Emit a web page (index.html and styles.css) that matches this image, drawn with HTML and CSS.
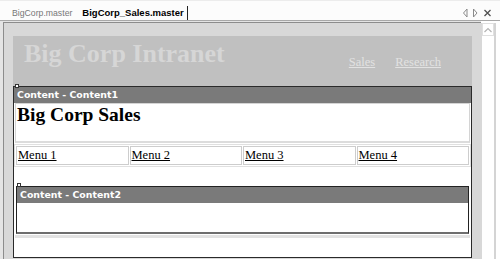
FILE: index.html
```html
<!DOCTYPE html>
<html lang="en">
<head>
  <meta charset="UTF-8" />
  <title>BigCorp_Sales.master</title>
  <link rel="stylesheet" href="styles.css">
</head>
<body>

  <div class="tabs">
    <span class="tab">BigCorp.master</span>
    <span class="tab active">BigCorp_Sales.master</span>
    <svg class="tab-tools" width="30" height="10" viewBox="0 0 30 10">
      <polygon points="5,1 1.5,5 5,9" fill="none" stroke="#8a8a8a" />
      <polygon points="11.5,1 15,5 11.5,9" fill="none" stroke="#8a8a8a" />
      <path d="M22.5 2 L28.5 8 M28.5 2 L22.5 8" stroke="#505050" stroke-width="1.3" />
    </svg>
  </div>

  <div class="workspace">
    <div class="surface">
      <div class="site-header">
        <span class="site-title">Big Corp Intranet</span>
        <nav class="site-nav">
          <a href="#">Sales</a>
          <a href="#">Research</a>
        </nav>
      </div>

      <div class="page-body">
        <span class="glyph first-glyph"></span>
        <div class="ph-bar">Content - Content1</div>
        <div class="sales-box">
          <h1>Big Corp Sales</h1>
        </div>
        <table class="menu">
          <tr>
            <td><a href="#">Menu 1</a></td>
            <td><a href="#">Menu 2</a></td>
            <td><a href="#">Menu 3</a></td>
            <td><a href="#">Menu 4</a></td>
          </tr>
        </table>

        <div class="ph-wrap">
          <div class="placeholder">
            <span class="glyph"></span>
            <div class="ph-bar">Content - Content2</div>
            <div class="ph-empty"></div>
          </div>
        </div>
      </div>
    </div>

    <div class="scrollbar">
      <div class="scroll-track">
        <div class="scroll-up">
          <svg width="10" height="6" viewBox="0 0 10 6">
            <path d="M1.5 5 L5 1.5 L8.5 5" fill="none" stroke="#b4b4b4" stroke-width="1.2" />
          </svg>
        </div>
      </div>
    </div>
  </div>

</body>
</html>
```

FILE: styles.css
```css
body {
  margin: 0;
  width: 500px;
  height: 259px;
  overflow: hidden;
  background: #e4e4e4;
}

/* document tabs */
.tabs {
  height: 19px;
  display: flex;
  align-items: flex-end;
  padding-left: 6px;
  background: #fcfcfc;
  border-top: 1px solid #ececec;
  border-bottom: 1px solid #a8a8a8;
}

.tab {
  height: 14px;
  line-height: 14px;
  padding: 0 5px 0 6px;
  font-family: "Liberation Sans", Arial, sans-serif;
  font-size: 8.7px;
  color: #777;
}

.tab.active {
  padding: 0 3px 0 5px;
  font-weight: bold;
  font-size: 9.5px;
  color: #000;
  border-right: 1px solid #222;
}

.tab-tools {
  margin-left: auto;
  margin-right: 8px;
  margin-bottom: 2px;
}

/* design surface */
.workspace {
  display: flex;
  height: 238px;
}

.surface {
  flex: 1;
  margin: 1px 0 0 3px;
  padding: 13px 9px 0 9px;
  background: #d8d8d8;
  border-left: 1px solid #8c8c8c;
  border-top: 1px solid #8c8c8c;
}

.site-header {
  height: 47px;
  padding: 3px 31px 0 11px;
  display: flex;
  justify-content: space-between;
  align-items: flex-start;
  background: #c0c0c0;
}

.site-title {
  font-family: "Liberation Serif", "Times New Roman", serif;
  font-weight: bold;
  font-size: 26px;
  color: #d6d6d6;
}

.site-nav {
  display: flex;
  gap: 20px;
  margin-top: 15.5px;
}

.site-nav a {
  font-family: "Liberation Serif", "Times New Roman", serif;
  font-size: 12.5px;
  color: #e2e2e2;
}

.page-body {
  position: relative;
  height: 170px;
  background: #fff;
  border: 1px solid #2a2a2a;
}

.glyph {
  position: absolute;
  left: 0;
  top: -4px;
  width: 2px;
  height: 2px;
  border: 1px solid #333;
  background: #fff;
}

.first-glyph {
  left: 1px;
  top: -3px;
}

.ph-bar {
  height: 16px;
  line-height: 16px;
  padding-left: 3px;
  background: #7a7a7a;
  color: #fff;
  font-family: "DejaVu Sans", Verdana, sans-serif;
  font-weight: bold;
  font-size: 9.4px;
}

.sales-box {
  height: 37px;
  margin: 0 1px;
  padding: 0 1px;
  border: 1px solid #d4d4d4;
  border-bottom: 2px solid #dcdcdc;
}

.sales-box h1 {
  margin: 0;
  font-family: "Liberation Serif", "Times New Roman", serif;
  font-size: 19.5px;
}

.menu {
  width: 457px;
  margin-top: 1px;
  border: 1px solid #e0e0e0;
  border-spacing: 1px;
}

.menu td {
  height: 17px;
  padding: 0 1px;
  border: 1px solid #cdcdcd;
  font-family: "Liberation Serif", "Times New Roman", serif;
  font-size: 12.5px;
}

.menu a {
  color: #000;
}

.ph-wrap {
  margin: 18px 1px 0 1px;
  padding: 1px 1px 1px 1px;
  border-bottom: 3px solid #e2e2e2;
}

.placeholder {
  position: relative;
  border: 1px solid #222;
  border-bottom: 2px solid #6e6e6e;
}

.ph-empty {
  height: 29px;
}

/* scrollbar */
.scrollbar {
  width: 19px;
  background: #fff;
}

.scroll-track {
  width: 12px;
  height: 100%;
  margin-top: 2px;
  border-left: 1px solid #d8d8d8;
  border-right: 2px solid #d4d4d4;
}

.scroll-up {
  height: 11px;
  display: flex;
  justify-content: center;
  align-items: center;
  border: 1px solid #e0e0e0;
}
```
